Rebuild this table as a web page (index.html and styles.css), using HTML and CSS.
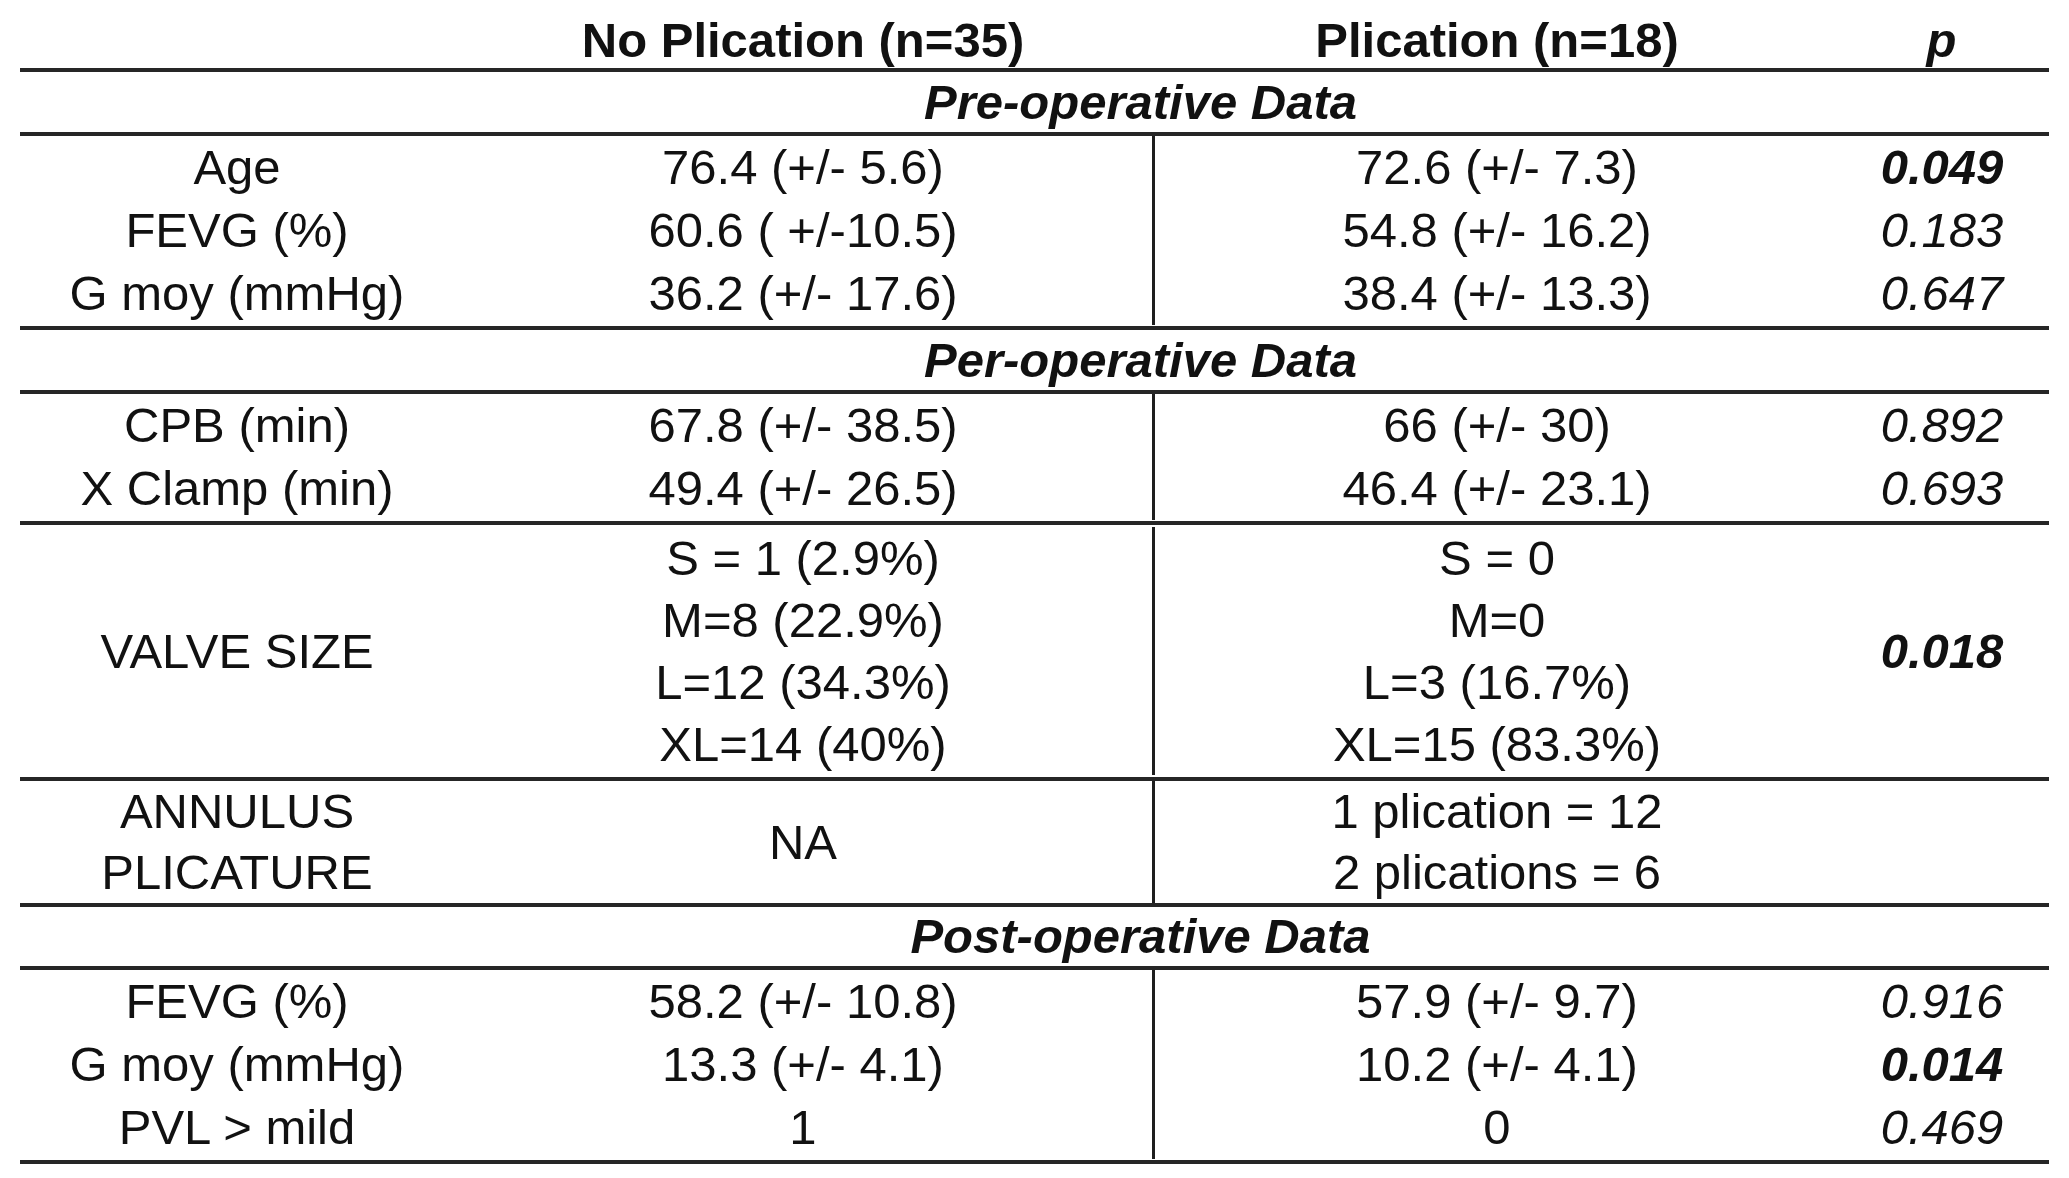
FILE: index.html
```html
<!DOCTYPE html>
<html lang="en">
<head>
<meta charset="utf-8">
<title>Plication table</title>
<link rel="stylesheet" href="styles.css">
</head>
<body>
<div class="table">
  <div class="grid header">
    <div class="cell"></div>
    <div class="cell">No Plication (n=35)</div>
    <div class="cell">Plication (n=18)</div>
    <div class="cell pval">p</div>
  </div>

  <div class="section">Pre-operative Data</div>

  <div class="grid group">
    <div class="cell"><div class="line">Age</div><div class="line">FEVG (%)</div><div class="line">G moy (mmHg)</div></div>
    <div class="cell"><div class="line">76.4 (+/- 5.6)</div><div class="line">60.6 ( +/-10.5)</div><div class="line">36.2 (+/- 17.6)</div></div>
    <div class="cell divider"><div class="line">72.6 (+/- 7.3)</div><div class="line">54.8 (+/- 16.2)</div><div class="line">38.4 (+/- 13.3)</div></div>
    <div class="cell p"><div class="line sig">0.049</div><div class="line">0.183</div><div class="line">0.647</div></div>
  </div>

  <div class="section">Per-operative Data</div>

  <div class="grid group">
    <div class="cell"><div class="line">CPB (min)</div><div class="line">X Clamp (min)</div></div>
    <div class="cell"><div class="line">67.8 (+/- 38.5)</div><div class="line">49.4 (+/- 26.5)</div></div>
    <div class="cell divider"><div class="line">66 (+/- 30)</div><div class="line">46.4 (+/- 23.1)</div></div>
    <div class="cell p"><div class="line">0.892</div><div class="line">0.693</div></div>
  </div>

  <div class="grid group valve">
    <div class="cell mid"><div class="line">VALVE SIZE</div></div>
    <div class="cell"><div class="line">S = 1 (2.9%)</div><div class="line">M=8 (22.9%)</div><div class="line">L=12 (34.3%)</div><div class="line">XL=14 (40%)</div></div>
    <div class="cell divider"><div class="line">S = 0</div><div class="line">M=0</div><div class="line">L=3 (16.7%)</div><div class="line">XL=15 (83.3%)</div></div>
    <div class="cell p mid"><div class="line sig">0.018</div></div>
  </div>

  <div class="grid group annulus">
    <div class="cell"><div class="line">ANNULUS</div><div class="line">PLICATURE</div></div>
    <div class="cell mid"><div class="line">NA</div></div>
    <div class="cell divider"><div class="line">1 plication = 12</div><div class="line">2 plications = 6</div></div>
    <div class="cell p"></div>
  </div>

  <div class="section post">Post-operative Data</div>

  <div class="grid group">
    <div class="cell"><div class="line">FEVG (%)</div><div class="line">G moy (mmHg)</div><div class="line">PVL &gt; mild</div></div>
    <div class="cell"><div class="line">58.2 (+/- 10.8)</div><div class="line">13.3 (+/- 4.1)</div><div class="line">1</div></div>
    <div class="cell divider"><div class="line">57.9 (+/- 9.7)</div><div class="line">10.2 (+/- 4.1)</div><div class="line">0</div></div>
    <div class="cell p"><div class="line">0.916</div><div class="line sig">0.014</div><div class="line">0.469</div></div>
  </div>
</div>
</body>
</html>
```

FILE: styles.css
```css
html, body {
  margin: 0;
  padding: 0;
  background: #ffffff;
}

body {
  font-family: "Liberation Sans", Arial, sans-serif;
  color: #111111;
  font-size: 49px;
}

.table {
  width: 2029px;
  margin-left: 20px;
}

.grid {
  display: grid;
  grid-template-columns: 434px 698px 690px 207px;
  border-bottom: 4px solid #262626;
}

.cell {
  box-sizing: border-box;
  text-align: center;
  white-space: nowrap;
}

.header {
  height: 72px;
  box-sizing: border-box;
  padding-top: 12px;
  line-height: 56px;
  font-weight: bold;
}

.header .pval {
  font-style: italic;
  padding-right: 8px;
}

.section {
  box-sizing: border-box;
  height: 64px;
  line-height: 60px;
  padding-left: 212px;
  text-align: center;
  font-weight: bold;
  font-style: italic;
  border-bottom: 4px solid #262626;
}

.section.post {
  height: 63px;
  line-height: 59px;
}

.group {
  line-height: 63px;
  padding-bottom: 1px;
}

.group.valve {
  line-height: 62px;
  padding: 2px 0;
}

.group.annulus {
  line-height: 61px;
  padding-bottom: 0;
}

.divider {
  border-left: 3px solid #1e1e1e;
  padding-right: 3px;
}

.p {
  font-style: italic;
  padding-right: 7px;
}

.sig {
  font-weight: bold;
}

.mid {
  display: flex;
  flex-direction: column;
  justify-content: center;
}
```
